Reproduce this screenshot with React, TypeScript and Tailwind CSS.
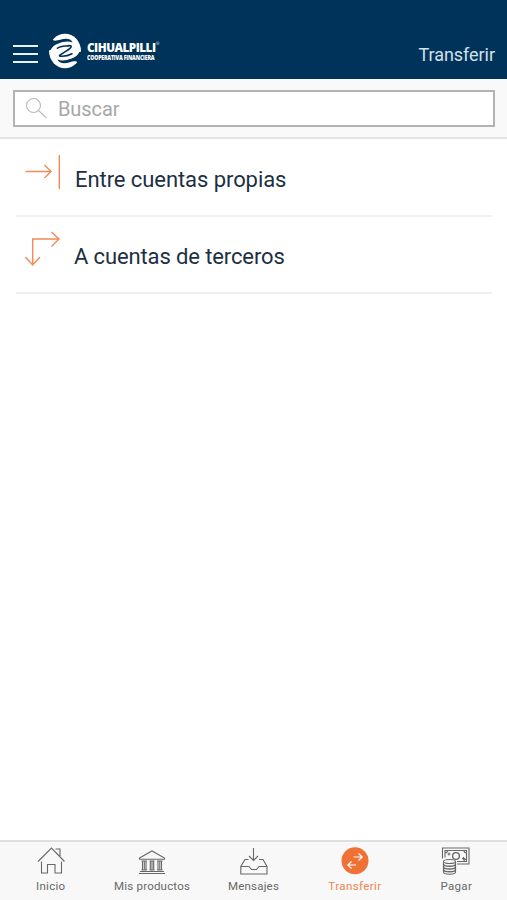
import type { ReactNode } from 'react'

interface TabProps {
  label: string
  labelClass: string
  active?: boolean
  children: ReactNode
}

function Logo() {
  return (
    <div className="flex items-start">
      <svg className="h-9 w-9" viewBox="0 0 36 36" fill="none">
        <ellipse cx="18" cy="18" rx="16" ry="17.3" fill="#fff" />
        <path d="M0 7.5L5.5 6.5C7 8.5 10 7.5 14 6.5C19 5.2 24 5.5 25.5 9.5C21 7.8 16 8.8 12 10.2C7.5 11.8 5 14 3.6 17L0 18Z" fill="#003359" />
        <path d="M36 28.5L30.5 29.5C29 27.5 26 28.5 22 29.5C17 30.8 12 30.5 10.5 26.5C15 28.2 20 27.2 24 25.8C28.5 24.2 31 22 32.4 19L36 18Z" fill="#003359" />
        <path d="M10.5 15.2C14 12.8 18 13.4 22.8 12.6C24.6 12.6 24.8 13.8 23 15.4C20.5 17.6 17.5 18.8 15.6 20.4C13.6 22 11.5 22.4 13 23.2C17 23.6 21 23 25 20.8" stroke="#003359" strokeWidth="1.6" strokeLinecap="round" strokeLinejoin="round" />
      </svg>
      <div className="mt-[7px] ml-1 font-['Open_Sans',sans-serif] whitespace-nowrap text-white">
        <div className="flex h-[14px] items-start">
          <span className="w-[69px] origin-left scale-x-[0.9] text-[13px] leading-[14px] font-extrabold tracking-[-0.55px]">CIHUALPILLI</span>
          <span className="text-[4px] leading-[8px]">®</span>
        </div>
        <div className="w-[67px] origin-left scale-x-[0.84] text-[6.2px] leading-[7px] font-extrabold tracking-[-0.2px]">COOPERATIVA FINANCIERA</div>
      </div>
    </div>
  )
}

function Tab({ label, labelClass, active, children }: TabProps) {
  return (
    <button className={`flex flex-1 flex-col items-center pt-[3px] ${active ? 'text-[#f0834f]' : 'text-[#686868]'}`}>
      <svg className="h-8 w-8" viewBox="0 0 32 32" fill="none" stroke="currentColor" strokeWidth="1.1">
        {children}
      </svg>
      <span className={`mt-px text-[11.5px] leading-4 whitespace-nowrap ${labelClass}`}>{label}</span>
    </button>
  )
}

export default function App() {
  return (
    <div className="flex h-[900px] w-[507px] flex-col bg-white font-['Roboto',sans-serif]">
      <header className="flex h-[79px] items-start bg-[#003359] pr-3 pl-[13px] text-[#d3e0ea]">
        <button className="mt-[45px] flex w-[25px] flex-col gap-1.5" aria-label="Menú">
          <span className="h-[2px] w-full bg-[#e8f1f7]" />
          <span className="h-[2px] w-full bg-[#e8f1f7]" />
          <span className="h-[2px] w-full bg-[#e8f1f7]" />
        </button>
        <div className="mt-[33px] ml-[9px]">
          <Logo />
        </div>
        <h1 className="mt-[43px] ml-auto text-[18px] leading-6 tracking-[-0.05px]">Transferir</h1>
      </header>

      <div className="h-[60px] border-b-2 border-[#e2e2e2] bg-[#f9f9f9] pt-[11px] pr-3 pl-[13px]">
        <div className="flex h-[37px] items-center border-2 border-[#b3b3b3] bg-white pl-2.5 text-[#a5a7a9]">
          <svg className="h-6 w-6" viewBox="0 0 24 24" fill="none" stroke="#b9b9b9" strokeWidth="1.1">
            <circle cx="8.5" cy="8.5" r="7" />
            <path d="M13.5 13.5L21.5 21" />
          </svg>
          <span className="ml-[9px] text-[20px] leading-6 tracking-[-0.1px]">Buscar</span>
        </div>
      </div>

      <main className="flex-1 pr-[15px] pl-4 text-[22px] text-[#1c3042]">
        <div className="flex h-[78px] border-b-2 border-[#efefef]">
          <svg className="mt-3 ml-2 h-10 w-10" viewBox="0 0 40 40" fill="none" stroke="#f28a59" strokeWidth="1.4">
            <path d="M1.5 20.5H27M20.5 14L27 20.5L20.5 27M35.3 4V38" />
          </svg>
          <span className="mt-[27px] ml-[11px] leading-7 tracking-[-0.07px]">Entre cuentas propias</span>
        </div>
        <div className="flex h-[77px] border-b-2 border-[#efefef]">
          <svg className="mt-3 ml-2 h-10 w-10" viewBox="0 0 40 40" fill="none" stroke="#f28a59" strokeWidth="1.4">
            <path d="M8.7 36.5V10H35M27.5 3L35 10L27.5 17.5M1.5 28L8.7 36L16 28" />
          </svg>
          <span className="mt-[26px] ml-[10px] leading-7 tracking-[-0.12px]">A cuentas de terceros</span>
        </div>
      </main>

      <nav className="flex h-[60px] border-t-2 border-[#dfdfdf] bg-[#f8f8f8]">
        <Tab label="Inicio" labelClass="tracking-[0.3px]">
          <path d="M3 16.5L16.5 3L29.5 16.5M20.5 4H25V11M6.5 16.5V28H12.5V19.5H20V28H26.5V16.5" />
        </Tab>
        <Tab label="Mis productos" labelClass="tracking-[0.2px]">
          <path d="M3.5 13L16 6L28.5 13V14.2H3.5ZM4 26.5H28M3 28.5H29" />
          <path d="M5.5 16H11M13.5 16H18.5M21 16H26.5M5.5 25H11M13.5 25H18.5M21 25H26.5" />
          <path d="M6.5 16V25M8.3 16V25M10 16V25M14.3 16V25M16 16V25M17.7 16V25M22 16V25M23.8 16V25M25.5 16V25" />
        </Tab>
        <Tab label="Mensajes" labelClass="tracking-[0.2px]">
          <path d="M15.5 3V15.5M11 11L15.5 15.5L20 11M10.5 14.5H7L2.8 21.5V29H29V21.5L25 14.5H21M2.8 21.5H11L13.5 24.5H18.5L21 21.5H29" />
        </Tab>
        <Tab label="Transferir" labelClass="tracking-[0.4px]" active>
          <circle cx="16" cy="15.7" r="13.5" fill="#ef7136" stroke="none" />
          <path d="M14.5 12H23M19.5 8.5L23.2 12L19.5 15.5M17 20H9M12.5 16.5L8.8 20L12.5 23.5" stroke="#fff" strokeWidth="1.1" />
        </Tab>
        <Tab label="Pagar" labelClass="tracking-[0.3px]">
          <path d="M2.5 13.5V3H29V19H17M5 12.5V5.5H26.5V16.5H17M5 8C6.5 8 7.5 7 7.5 5.5M24 5.5C24 7 25 8 26.5 8M24 16.5C24 15 25 14 26.5 14" />
          <circle cx="16" cy="11" r="3.4" strokeWidth="1.4" />
          <path d="M7.5 9H10.5M9 7.5V10.5M22 13.5H25M23.5 12V15" />
          <path d="M3.5 16.5V27C3.5 30 15.5 30 15.5 27V16.5" fill="#f8f8f8" />
          <ellipse cx="9.5" cy="16.5" rx="6" ry="2" fill="#f8f8f8" />
          <path d="M3.5 19C3.5 22 15.5 22 15.5 19M3.5 21.7C3.5 24.7 15.5 24.7 15.5 21.7M3.5 24.4C3.5 27.4 15.5 27.4 15.5 24.4" strokeWidth="1.5" />
        </Tab>
      </nav>
    </div>
  )
}
